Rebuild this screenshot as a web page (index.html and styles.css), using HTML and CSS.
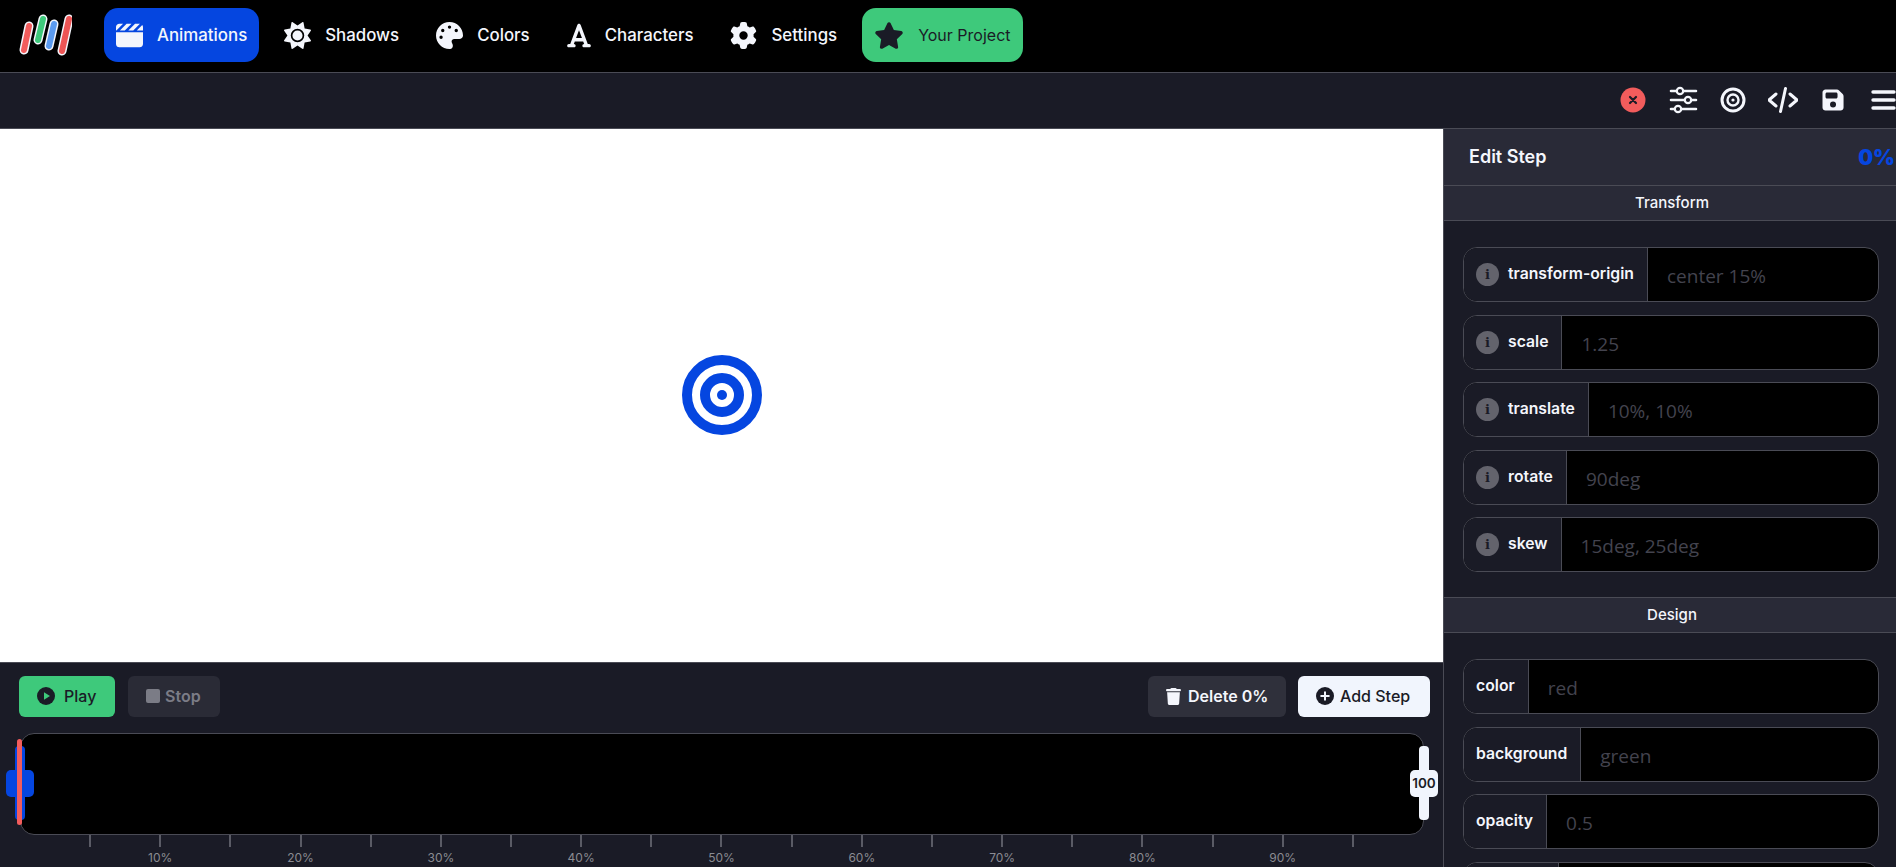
FILE: index.html
```html
<!DOCTYPE html>
<html lang="en">
<head>
<meta charset="utf-8">
<title>Animations</title>
<link rel="stylesheet" href="styles.css">
</head>
<body>
<div class="app">
  <nav class="nav">
    <svg class="logo" viewBox="0 0 54 44">
      <g fill="none" stroke-linecap="round">
        <g stroke="#f4f6fc" stroke-width="9">
          <line x1="6" y1="37" x2="11" y2="13"/><line x1="20" y1="27" x2="25" y2="6"/><line x1="31" y1="33" x2="36" y2="11"/><line x1="44" y1="38" x2="51" y2="6"/>
        </g>
        <g stroke-width="6">
          <line x1="6" y1="37" x2="11" y2="13" stroke="#f25c5c"/><line x1="20" y1="27" x2="25" y2="6" stroke="#3ec97b"/><line x1="31" y1="33" x2="36" y2="11" stroke="#5b9bf0"/><line x1="44" y1="38" x2="51" y2="6" stroke="#ee5555"/>
        </g>
      </g>
    </svg>
    <a class="nav-link active">
      <svg class="ic27" viewBox="0 0 512 512"><path fill="#f4f6fc" d="M448 32H361.9l-1 1-127 127h92.1l1-1L453.8 32.3c-1.9-.2-3.8-.3-5.8-.3zm64 128V96c0-15.1-5.3-29.1-14-40l-104 104H512zM294.1 32H201.9l-1 1L73.9 160h92.1l1-1 127-127zM64 32C28.7 32 0 60.7 0 96v64H6.1l1-1 127-127H64zM512 192H0V416c0 35.3 28.7 64 64 64H448c35.3 0 64-28.7 64-64V192z"/></svg>
      <span>Animations</span>
    </a>
    <a class="nav-link">
      <svg class="ic27" viewBox="0 0 512 512"><path fill="#f4f6fc" d="M361.5 1.2c5 2.1 8.6 6.6 9.6 11.9L391 121l107.9 19.8c5.3 1 9.8 4.6 11.9 9.6s1.5 10.7-1.6 15.2L446.9 256l62.3 90.3c3.1 4.5 3.7 10.2 1.6 15.2s-6.6 8.6-11.9 9.6L391 391 371.1 498.9c-1 5.3-4.6 9.8-9.6 11.9s-10.7 1.5-15.2-1.6L256 446.9l-90.3 62.3c-4.5 3.1-10.2 3.7-15.2 1.6s-8.6-6.6-9.6-11.9L121 391 13.1 371.1c-5.3-1-9.8-4.6-11.9-9.6s-1.5-10.7 1.6-15.2L65.1 256 2.8 165.7c-3.1-4.5-3.7-10.2-1.6-15.2s6.6-8.6 11.9-9.6L121 121 140.9 13.1c1-5.3 4.6-9.8 9.6-11.9s10.7-1.5 15.2 1.6L256 65.1 346.3 2.8c4.5-3.1 10.2-3.7 15.2-1.6zM160 256a96 96 0 1 1 192 0 96 96 0 1 1 -192 0zm224 0a128 128 0 1 0 -256 0 128 128 0 1 0 256 0z"/></svg>
      <span>Shadows</span>
    </a>
    <a class="nav-link">
      <svg class="ic27" viewBox="0 0 512 512"><path fill="#f4f6fc" d="M512 256c0 .9 0 1.8 0 2.7c-.4 36.5-33.6 61.3-70.1 61.3H344c-26.5 0-48 21.5-48 48c0 3.4 .4 6.7 1 9.9c2.1 10.2 6.5 20 10.8 29.9c6.1 13.8 12.1 27.5 12.1 42c0 31.8-21.6 60.7-53.4 62c-3.5 .1-7 .2-10.6 .2C114.6 512 0 397.4 0 256S114.6 0 256 0S512 114.6 512 256zM128 288a32 32 0 1 0 -64 0 32 32 0 1 0 64 0zm0-96a32 32 0 1 0 0-64 32 32 0 1 0 0 64zM288 96a32 32 0 1 0 -64 0 32 32 0 1 0 64 0zm96 96a32 32 0 1 0 0-64 32 32 0 1 0 0 64z"/></svg>
      <span>Colors</span>
    </a>
    <a class="nav-link">
      <svg class="ic24" viewBox="0 0 448 512"><path fill="#f4f6fc" d="M254 52.8C249.3 40.3 237.3 32 224 32s-25.3 8.3-30 20.8L57.8 416H32c-17.7 0-32 14.3-32 32s14.3 32 32 32h96c17.7 0 32-14.3 32-32s-14.3-32-32-32h-1.8l18-48H303.8l18 48H320c-17.7 0-32 14.3-32 32s14.3 32 32 32h96c17.7 0 32-14.3 32-32s-14.3-32-32-32H390.2L254 52.8zM279.8 304H168.2L224 155.1 279.8 304z"/></svg>
      <span>Characters</span>
    </a>
    <a class="nav-link">
      <svg class="ic27" viewBox="0 0 512 512"><path fill="#f4f6fc" d="M495.9 166.6c3.2 8.7 .5 18.4-6.4 24.6l-43.3 39.4c1.1 8.3 1.7 16.8 1.7 25.4s-.6 17.1-1.7 25.4l43.3 39.4c6.9 6.2 9.6 15.9 6.4 24.6c-4.4 11.9-9.7 23.3-15.8 34.3l-4.7 8.1c-6.6 11-14 21.4-22.1 31.2c-5.9 7.2-15.7 9.6-24.5 6.8l-55.7-17.7c-13.4 10.3-28.2 18.9-44 25.4l-12.5 57.1c-2 9.1-9 16.3-18.2 17.8c-13.8 2.3-28 3.5-42.5 3.5s-28.7-1.2-42.5-3.5c-9.2-1.5-16.2-8.7-18.2-17.8l-12.5-57.1c-15.8-6.5-30.6-15.1-44-25.4L83.1 425.9c-8.8 2.8-18.6 .3-24.5-6.8c-8.1-9.8-15.5-20.2-22.1-31.2l-4.7-8.1c-6.1-11-11.4-22.4-15.8-34.3c-3.2-8.7-.5-18.4 6.4-24.6l43.3-39.4C64.6 273.1 64 264.6 64 256s.6-17.1 1.7-25.4L22.4 191.2c-6.9-6.2-9.6-15.9-6.4-24.6c4.4-11.9 9.7-23.3 15.8-34.3l4.7-8.1c6.6-11 14-21.4 22.1-31.2c5.9-7.2 15.7-9.6 24.5-6.8l55.7 17.7c13.4-10.3 28.2-18.9 44-25.4l12.5-57.1c2-9.1 9-16.3 18.2-17.8C227.3 1.2 241.5 0 256 0s28.7 1.2 42.5 3.5c9.2 1.5 16.2 8.7 18.2 17.8l12.5 57.1c15.8 6.5 30.6 15.1 44 25.4l55.7-17.7c8.8-2.8 18.6-.3 24.5 6.8c8.1 9.8 15.5 20.2 22.1 31.2l4.7 8.1c6.1 11 11.4 22.4 15.8 34.3zM256 336a80 80 0 1 0 0-160 80 80 0 1 0 0 160z"/></svg>
      <span>Settings</span>
    </a>
    <a class="nav-link project">
      <svg class="ic30" viewBox="0 0 576 512"><path fill="#1a1b26" d="M316.9 18C311.6 7 300.4 0 288.1 0s-23.4 7-28.8 18L195 150.3 51.4 171.5c-12 1.8-22 10.2-25.7 21.7s-.7 24.2 7.9 32.7L137.8 329 113.2 474.7c-2 12 3 24.2 12.9 31.3s23 8 33.8 2.3l128.3-68.5 128.3 68.5c10.8 5.7 23.9 4.9 33.8-2.3s14.9-19.3 12.9-31.3L438.5 329 542.7 225.9c8.6-8.5 11.7-21.2 7.9-32.7s-13.7-19.9-25.7-21.7L381.2 150.3 316.9 18z"/></svg>
      <span>Your Project</span>
    </a>
  </nav>

  <div class="toolbar">
    <span class="tool"><svg class="tool-ic" viewBox="0 0 30 30"><circle cx="15" cy="15" r="12.5" fill="#f25c5c"/><path d="M12 12l6 6M18 12l-6 6" stroke="#1a1b26" stroke-width="2.2" stroke-linecap="round"/></svg></span>
    <span class="tool"><svg class="tool-ic" viewBox="0 0 30 30" fill="none" stroke="#f4f6fc" stroke-width="2.6" stroke-linecap="round"><path d="M3 6h25M3 15h25M3 24h25"/><g fill="#1a1b26" stroke-width="2.2"><circle cx="12" cy="6" r="3.2"/><circle cx="20" cy="15" r="3.2"/><circle cx="10" cy="24" r="3.2"/></g></svg></span>
    <span class="tool"><svg class="tool-ic" viewBox="0 0 30 30" fill="none" stroke="#f4f6fc"><circle cx="15" cy="15" r="11" stroke-width="3"/><circle cx="15" cy="15" r="5.5" stroke-width="2.4"/><circle cx="15" cy="15" r="1.6" fill="#f4f6fc" stroke="none"/></svg></span>
    <span class="tool"><svg class="tool-ic" viewBox="0 0 30 30" fill="none" stroke="#f4f6fc" stroke-width="3" stroke-linecap="round" stroke-linejoin="round"><path d="M8 9l-7 6 7 6M22 9l7 6-7 6M17.5 3.5l-5 23"/></svg></span>
    <span class="tool"><svg class="tool-ic" viewBox="0 0 30 30"><path fill="#f4f6fc" transform="translate(4.5 3) scale(.047)" d="M64 32C28.7 32 0 60.7 0 96V416c0 35.3 28.7 64 64 64H384c35.3 0 64-28.7 64-64V173.3c0-17-6.7-33.3-18.7-45.3L352 50.7C340 38.7 323.7 32 306.7 32H64zm0 96c0-17.7 14.3-32 32-32H288c17.7 0 32 14.3 32 32v64c0 17.7-14.3 32-32 32H96c-17.7 0-32-14.3-32-32V128zM224 288a64 64 0 1 1 0 128 64 64 0 1 1 0-128z"/></svg></span>
    <span class="tool"><svg class="tool-ic" viewBox="0 0 30 30" fill="none" stroke="#f4f6fc" stroke-width="3.4" stroke-linecap="round"><path d="M5 7h21M5 15h21M5 23h21"/></svg></span>
  </div>

  <div class="main">
    <div class="workspace">
      <div class="stage">
        <svg class="target" viewBox="0 0 80 80"><circle cx="40" cy="40" r="35" fill="none" stroke="#0546e0" stroke-width="10"/><circle cx="40" cy="40" r="17" fill="none" stroke="#0546e0" stroke-width="10"/><circle cx="40" cy="40" r="5" fill="#0546e0"/></svg>
      </div>
      <div class="timeline">
        <div class="actions">
          <button class="btn btn-play"><svg class="ic18" viewBox="0 0 18 18"><circle cx="9" cy="9" r="9" fill="#1a1b26"/><path d="M7 5.2l6 3.8-6 3.8z" fill="#3ec97b"/></svg>Play</button>
          <button class="btn btn-stop"><span class="stop-square"></span>Stop</button>
          <span class="spacer"></span>
          <button class="btn btn-delete"><svg class="trash" viewBox="0 0 448 512"><path fill="#f4f6fc" d="M135.2 17.7L128 32H32C14.3 32 0 46.3 0 64S14.3 96 32 96H416c17.7 0 32-14.3 32-32s-14.3-32-32-32H320l-7.2-14.3C307.4 6.8 296.3 0 284.2 0H163.8c-12.1 0-23.2 6.8-28.6 17.7zM416 128H32L53.2 467c1.6 25.3 22.6 45 47.9 45H346.9c25.3 0 46.3-19.7 47.9-45L416 128z"/></svg>Delete 0%</button>
          <button class="btn btn-add"><svg class="ic18" viewBox="0 0 18 18"><circle cx="9" cy="9" r="9" fill="#1a1b26"/><path d="M9 5.2v7.6M5.2 9h7.6" stroke="#f1f5fd" stroke-width="2" stroke-linecap="round"/></svg>Add Step</button>
        </div>
        <div class="track">
          <div class="handle handle-start"><span class="knob"></span></div>
          <div class="playhead"></div>
          <div class="handle handle-end"><span class="knob">100</span></div>
        </div>
        <div class="ruler">
          <div class="mark"><i></i></div><div class="mark"><i></i><b>10%</b></div>
          <div class="mark"><i></i></div><div class="mark"><i></i><b>20%</b></div>
          <div class="mark"><i></i></div><div class="mark"><i></i><b>30%</b></div>
          <div class="mark"><i></i></div><div class="mark"><i></i><b>40%</b></div>
          <div class="mark"><i></i></div><div class="mark"><i></i><b>50%</b></div>
          <div class="mark"><i></i></div><div class="mark"><i></i><b>60%</b></div>
          <div class="mark"><i></i></div><div class="mark"><i></i><b>70%</b></div>
          <div class="mark"><i></i></div><div class="mark"><i></i><b>80%</b></div>
          <div class="mark"><i></i></div><div class="mark"><i></i><b>90%</b></div>
          <div class="mark"><i></i></div>
        </div>
      </div>
    </div>

    <aside class="panel">
      <header class="panel-head"><span class="panel-title">Edit Step</span><span class="panel-pct">0%</span></header>
      <h3 class="section-head">Transform</h3>
      <div class="fields">
        <div class="field"><div class="label"><span class="info">i</span>transform-origin</div><div class="value">center 15%</div></div>
        <div class="field"><div class="label"><span class="info">i</span>scale</div><div class="value">1.25</div></div>
        <div class="field"><div class="label"><span class="info">i</span>translate</div><div class="value">10%, 10%</div></div>
        <div class="field"><div class="label"><span class="info">i</span>rotate</div><div class="value">90deg</div></div>
        <div class="field"><div class="label"><span class="info">i</span>skew</div><div class="value">15deg, 25deg</div></div>
      </div>
      <h3 class="section-head section-next">Design</h3>
      <div class="fields">
        <div class="field"><div class="label">color</div><div class="value">red</div></div>
        <div class="field"><div class="label">background</div><div class="value">green</div></div>
        <div class="field"><div class="label">opacity</div><div class="value">0.5</div></div>
        <div class="field"><div class="label label-cut"></div><div class="value"></div></div>
      </div>
    </aside>
  </div>
</div>
</body>
</html>
```

FILE: styles.css
```css
* { box-sizing: border-box; }
html, body { margin: 0; height: 100%; overflow: hidden; }
body { font-family: Inter, "Liberation Sans", sans-serif; background: #1a1b26; color: #f4f6fc; }
.app { width: 1896px; height: 867px; display: flex; flex-direction: column; overflow: hidden; }

.nav { height: 73px; flex: none; display: flex; align-items: center; gap: 13px; padding: 0 0 2px 18px; background: #000; border-bottom: 1px solid #4a4b55; }
.logo { width: 54px; height: 44px; margin-right: 19px; flex: none; }
.nav-link { height: 54px; display: flex; align-items: center; gap: 14px; padding: 0 12px; border-radius: 14px; font-size: 16.85px; font-weight: 500; color: #f4f6fc; }
.nav-link.active { background: #0546e0; }
.nav-link.project { background: #3ec97b; color: #1a1b26; font-size: 16px; font-weight: 400; }
.ic27 { width: 27px; height: 27px; flex: none; }
.ic24 { width: 24px; height: 27px; flex: none; }
.ic30 { width: 30px; height: 27px; flex: none; }

.toolbar { height: 56px; flex: none; display: flex; align-items: center; justify-content: flex-end; gap: 20px; padding-bottom: 2px; margin-right: -2px; background: #1a1b26; border-bottom: 1px solid #4a4b55; }
.tool { width: 30px; height: 30px; display: flex; }
.tool-ic { width: 30px; height: 30px; }

.main { flex: 1; min-height: 0; display: flex; }
.workspace { width: 1444px; flex: none; display: flex; flex-direction: column; border-right: 1px solid #4a4b55; }
.stage { height: 533px; flex: none; background: #fff; display: flex; align-items: center; justify-content: center; padding-bottom: 2px; }
.target { width: 80px; height: 80px; }

.timeline { flex: 1; min-height: 0; border-top: 1px solid #4a4b55; background: #1a1b26; padding: 13px 13px 0 19px; }
.actions { display: flex; gap: 13px; height: 41px; }
.spacer { flex: 1; }
.btn { height: 41px; display: flex; align-items: center; border: 0; border-radius: 6px; font: 600 16px Inter, "Liberation Sans", sans-serif; padding: 0 0 1px; }
.btn-play { width: 96px; padding-left: 18px; gap: 9px; background: #3ec97b; color: #1a1b26; font-weight: 500; }
.btn-stop { width: 92px; padding-left: 18px; gap: 5px; background: #2a2b36; color: #7b7c86; }
.stop-square { width: 14px; height: 14px; border-radius: 2px; background: #7b7c86; }
.btn-delete { width: 138px; padding-left: 18px; gap: 7px; background: #2f303b; color: #f4f6fc; margin-right: -1px; }
.btn-add { width: 132px; padding-left: 18px; gap: 6px; background: #f1f5fd; color: #1a1b26; font-weight: 500; }
.ic18 { width: 18px; height: 18px; flex: none; }
.trash { width: 15px; height: 17px; flex: none; }

.track { position: relative; width: 1404px; height: 102px; margin: 16px 0 0 1px; background: #000; border: 1px solid #4a4b55; border-radius: 14px; }
.handle { position: absolute; top: 12px; width: 10px; height: 74px; border-radius: 4px; display: flex; align-items: center; justify-content: center; }
.handle-start { left: -6px; background: #0546e0; }
.handle-end { right: -6px; background: #f1f5fd; }
.knob { flex: none; width: 28px; height: 27px; border-radius: 5px; display: flex; align-items: center; justify-content: center; font-size: 13.5px; font-weight: 600; color: #1a1b26; }
.handle-start .knob { background: #0546e0; }
.handle-end .knob { background: #f1f5fd; }
.playhead { position: absolute; left: -4px; top: 5px; width: 5px; height: 86px; border-radius: 3px; background: #f25c5c; }

.ruler { display: flex; width: 1333px; margin: 0 0 0 36px; }
.mark { flex: 1; display: flex; flex-direction: column; align-items: center; }
.mark i { width: 2px; height: 12px; background: #5a5b65; flex: none; }
.mark b { margin-top: 4px; font-size: 12px; line-height: 14px; font-weight: 400; color: #8a8b92; }

.panel { flex: 1; min-width: 0; overflow: hidden; background: #1a1b26; }
.panel-head { height: 57px; display: flex; align-items: center; justify-content: space-between; padding: 0 0 2px 25px; background: #292a37; border-bottom: 1px solid #4a4b55; }
.panel-title { font-size: 18px; font-weight: 600; }
.panel-pct { font-size: 21px; font-weight: 900; color: #0546e0; margin: 2px 1px 0 0; }
.section-head { height: 35px; margin: 0; padding: 0 0 2px 4px; display: flex; align-items: center; justify-content: center; font-size: 15px; font-weight: 500; background: #292a37; border-bottom: 1px solid #4a4b55; }
.section-next { height: 36px; border-top: 1px solid #4a4b55; padding-bottom: 1px; }
.fields { display: flex; flex-direction: column; gap: 12.5px; padding: 26px 17px 25px 19px; }
.field { height: 55px; flex: none; display: flex; background: #000; border: 1px solid #4a4b55; border-radius: 14px; overflow: hidden; }
.label { flex: none; display: flex; align-items: center; gap: 9px; padding: 0 13px 2px 12px; background: #1a1b26; border-right: 1px solid #4a4b55; font-size: 15.75px; font-weight: 600; color: #f4f6fc; }
.label-cut { width: 95px; }
.info { width: 23px; height: 23px; margin-top: 2px; border-radius: 50%; background: #63636c; color: #1a1b26; font-family: "DejaVu Serif", serif; font-size: 13px; font-weight: 700; display: flex; align-items: center; justify-content: center; }
.value { flex: 1; display: flex; align-items: center; padding: 3px 0 0 19px; font-family: "Open Sans", sans-serif; font-size: 19px; color: #43434e; }
```
